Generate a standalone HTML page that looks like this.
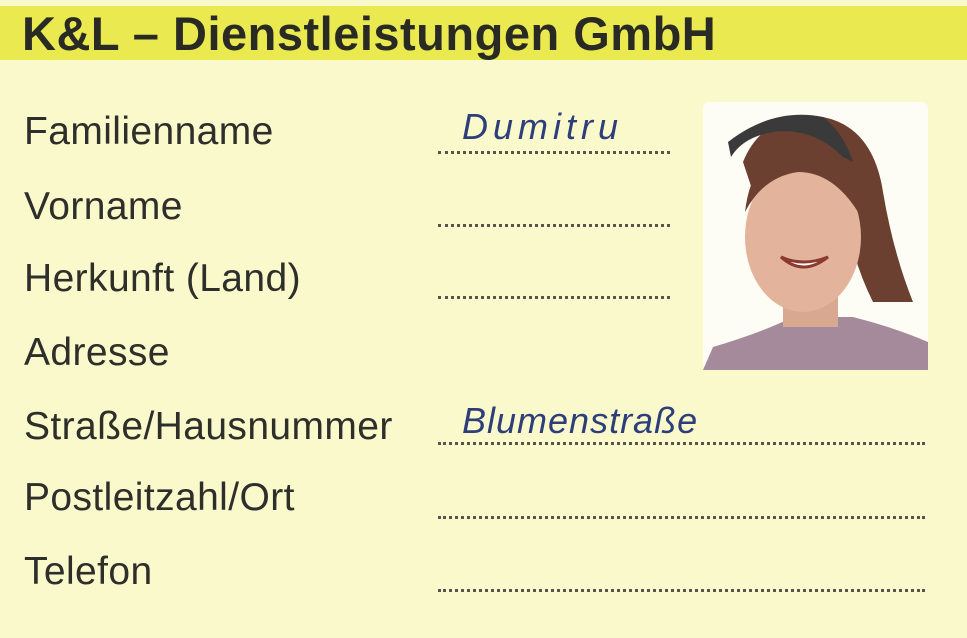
<!DOCTYPE html>
<html><head><style>
body{margin:0;width:967px;height:638px;background:#fff;overflow:hidden;font-family:"Liberation Sans",sans-serif}
.card{position:absolute;left:0;top:0;width:967px;height:638px;background:#f9f9cc}
.hdr{position:absolute;left:0;top:6px;width:967px;height:54px;background:#eaea50}
.hdr span{position:absolute;left:22px;top:0px;font-size:47px;font-weight:bold;color:#2a2a24;letter-spacing:0.5px}
.l{position:absolute;left:24px;font-size:39px;color:#2e2e2a;letter-spacing:0.4px}
.d{position:absolute;left:438px;border-top:3px dotted #55554a;height:0}
.h{position:absolute;font-family:"Liberation Sans",sans-serif;font-style:italic;font-size:36px;color:#2d3e7a}
</style></head><body><div class="card">
<div class="hdr"><span>K&amp;L – Dienstleistungen GmbH</span></div>
<div class="l" style="top:110px">Familienname</div>
<div class="l" style="top:185px">Vorname</div>
<div class="l" style="top:257px">Herkunft (Land)</div>
<div class="l" style="top:331px">Adresse</div>
<div class="l" style="top:405px">Straße/Hausnummer</div>
<div class="l" style="top:476px">Postleitzahl/Ort</div>
<div class="l" style="top:550px">Telefon</div>
<div class="d" style="top:151px;width:232px"></div>
<div class="d" style="top:224px;width:232px"></div>
<div class="d" style="top:296px;width:232px"></div>
<div class="d" style="top:442px;width:487px"></div>
<div class="d" style="top:516px;width:487px"></div>
<div class="d" style="top:589px;width:487px"></div>
<div class="h" style="left:462px;top:106px;letter-spacing:5px">Dumitru</div>
<div class="h" style="left:462px;top:400px;letter-spacing:1px">Blumenstraße</div>
<svg style="position:absolute;left:703px;top:102px" width="225" height="268" viewBox="0 0 225 268">
<rect width="225" height="268" rx="6" fill="#fdfdf6"/>
<path d="M40 60 Q60 10 120 15 Q170 25 180 90 Q190 150 210 200 L170 200 Q150 160 145 120 L60 120 Z" fill="#6b4030"/>
<path d="M0 268 L10 245 Q60 230 90 215 L150 215 Q190 225 225 240 L225 268 Z" fill="#a58a9c"/>
<rect x="80" y="180" width="55" height="45" fill="#d9a890"/>
<ellipse cx="100" cy="135" rx="58" ry="75" fill="#e3b39b"/>
<path d="M42 110 Q50 40 110 45 Q160 50 155 110 Q130 70 95 70 Q60 75 42 110Z" fill="#6b4030"/>
<path d="M78 155 Q100 175 125 155 Q100 165 78 155Z" fill="#fff" stroke="#8a3a30" stroke-width="3"/>
<path d="M25 40 Q70 5 120 15 Q140 30 150 60 L140 55 Q110 25 70 30 Q40 35 28 55Z" fill="#3a3a3a"/>
</svg>
</div></body></html>
